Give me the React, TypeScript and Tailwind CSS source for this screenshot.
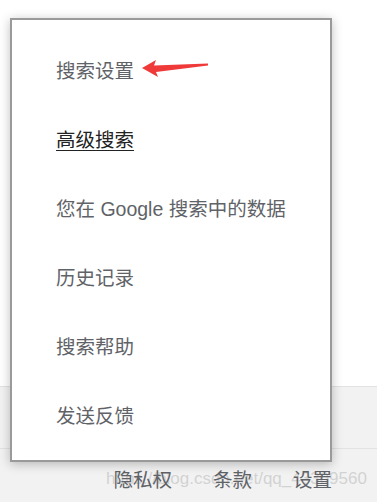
const FONT = "font-['Liberation_Sans','Noto_Sans_CJK_SC',sans-serif]";

const ITEMS = ['搜索设置', '高级搜索', '您在 Google 搜索中的数据', '历史记录', '搜索帮助', '发送反馈'];

function Arrow() {
  return (
    <svg className="absolute left-[140px] top-[58px]" width="72" height="22" viewBox="140 58 72 22">
      <polygon points="142,68 156,60 154,65.5 208,63.5 208,65.5 156,72 158,77" fill="#f03a3a" />
    </svg>
  );
}

export default function App() {
  return (
    <div className={`${FONT} relative h-[502px] w-[377px] overflow-hidden bg-white`}>
      <div className="h-[386px] bg-white" />
      <div className="h-[62px] border-t border-[#e2e2e2] bg-[#f2f2f2]" />
      <div className="relative h-[54px] border-t border-[#e2e2e2] bg-[#f2f2f2]">
        <div className="absolute left-[106px] top-[19px] text-[17px] leading-[22px] whitespace-nowrap text-[#d2d2d2]">
          https://blog.csdn.net/qq_43309560
        </div>
        <div className="relative flex justify-end gap-[41px] pr-[45px] pt-[20px] text-[19.5px] leading-[22px] text-[#5f6368]">
          <span>隐私权</span>
          <span>条款</span>
          <span>设置</span>
        </div>
      </div>

      <div className="absolute left-[10px] top-[18px] w-[322px] border-2 border-[#9a9a9a] bg-white pb-[10px] pt-[16px] shadow-[0_2px_10px_rgba(0,0,0,0.25)]">
        {ITEMS.map((label, i) => (
          <div key={label} className="flex h-[69px] items-center pl-[44px] text-[19.5px] leading-[22px]">
            {i === 1 ? (
              <span className="text-[#222] underline underline-offset-[3px]">{label}</span>
            ) : (
              <span className="text-[#5f6368]">{label}</span>
            )}
          </div>
        ))}
      </div>
      <Arrow />
    </div>
  );
}
